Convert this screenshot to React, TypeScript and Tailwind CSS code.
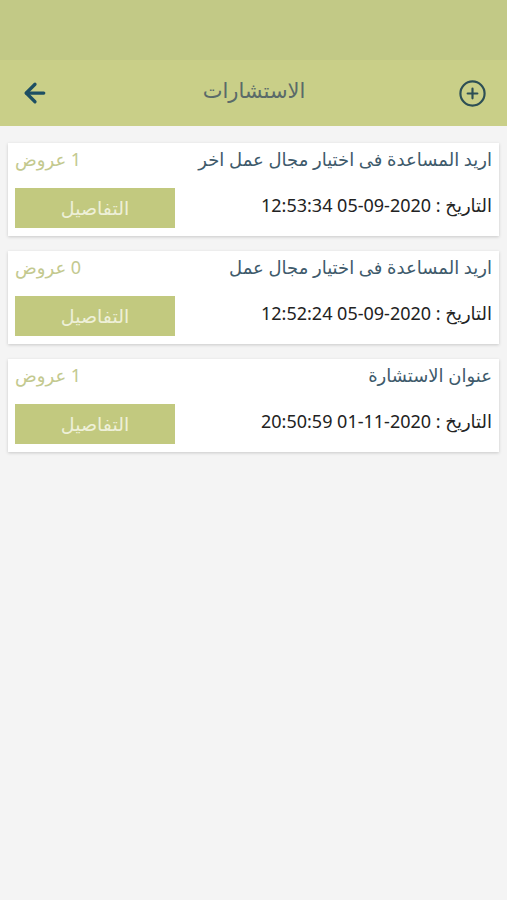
import { ArrowLeft, CirclePlus } from "lucide-react";

const items = [
  { title: "اريد المساعدة فى اختيار مجال عمل اخر", offers: "1 عروض", date: "12:53:34 05-09-2020" },
  { title: "اريد المساعدة فى اختيار مجال عمل", offers: "0 عروض", date: "12:52:24 05-09-2020" },
  { title: "عنوان الاستشارة", offers: "1 عروض", date: "20:50:59 01-11-2020" },
];

function Card({ title, offers, date }: { title: string; offers: string; date: string }) {
  return (
    <div className="bg-white shadow-[0_1px_3px_rgba(0,0,0,0.18)] px-[7px] pb-[8px]">
      <div className="flex items-center justify-between h-[32px]">
        <span dir="rtl" className="text-[#c3c98f] text-[18px]">{offers}</span>
        <span dir="rtl" className="text-[#3e5a6b] text-[18px]">{title}</span>
      </div>
      <div className="flex items-center justify-between mt-[13px]">
        <button className="w-[160px] h-[40px] bg-[#c2c97f] text-[#eef0d8] text-[19px]">التفاصيل</button>
        <span dir="rtl" className="text-[#222] text-[18px] pb-[6px]">
          التاريخ : <span dir="ltr">{date}</span>
        </span>
      </div>
    </div>
  );
}

export default function App() {
  return (
    <div className="min-h-[900px] bg-[#f4f4f4] font-['Noto_Sans','DejaVu_Sans',sans-serif]">
      <div className="h-[60px] bg-[#c2c986]" />
      <div className="h-[66px] bg-[#c9cf88] flex items-center justify-between px-[20px]">
        <ArrowLeft className="w-[30px] h-[30px] text-[#1d4f63]" strokeWidth={2.6} />
        <span className="text-[21px] text-[#5a6a69] -mt-[4px]">الاستشارات</span>
        <CirclePlus className="w-[29px] h-[29px] text-[#2d4f55]" strokeWidth={1.8} />
      </div>
      <div className="flex flex-col gap-[15px] px-[8px] pt-[17px]">
        {items.map((it, i) => (
          <Card key={i} {...it} />
        ))}
      </div>
    </div>
  );
}
